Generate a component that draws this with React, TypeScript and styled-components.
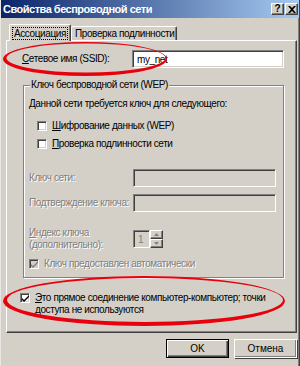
import React from 'react';
import styled, { createGlobalStyle } from 'styled-components';

const GlobalStyle = createGlobalStyle`
  html, body {
    margin: 0;
    padding: 0;
    background: #d4d0c8;
  }
  body {
    font-family: "Liberation Sans", Arial, sans-serif;
  }
`;

const Window = styled.div`
  position: relative;
  width: 300px;
  height: 366px;
  box-sizing: border-box;
  background: #d4d0c8;
  border-left: 1px solid #e8e6e2;
  border-right: 1px solid #404040;
  box-shadow: inset -1px 0 0 #808080;
  overflow: hidden;
  font-size: 10px;
  letter-spacing: -0.4px;
  color: #000;
`;

const TitleBar = styled.div`
  height: 18px;
  display: flex;
  align-items: center;
  padding: 0 1px 0 2px;
  background: linear-gradient(to right, #0a246a, #a6caf0);
`;

const TitleText = styled.div`
  flex: 1;
  color: #fff;
  font-weight: bold;
  font-size: 11px;
  letter-spacing: -0.5px;
`;

const CaptionButton = styled.div<{ $gap?: number }>`
  width: 13px;
  height: 12px;
  margin-left: ${({ $gap }) => $gap ?? 0}px;
  display: flex;
  align-items: center;
  justify-content: center;
  box-sizing: border-box;
  background: #d4d0c8;
  border: 1px solid;
  border-color: #fff #404040 #404040 #fff;
  box-shadow: inset -1px -1px 0 #808080;
  font-weight: bold;
  font-size: 10px;
  letter-spacing: 0;
  line-height: 1;
`;

const Body = styled.div`
  padding: 6px 0 0 5px;
`;

const TabStrip = styled.div`
  display: flex;
  align-items: flex-end;
  height: 16px;
  padding-left: 3px;
`;

const Tab = styled.div<{ $active?: boolean; $width: number }>`
  position: relative;
  z-index: ${({ $active }) => ($active ? 1 : 0)};
  width: ${({ $width }) => $width}px;
  height: ${({ $active }) => ($active ? 17 : 14)}px;
  margin-bottom: ${({ $active }) => ($active ? -1 : 0)}px;
  padding-left: ${({ $active }) => ($active ? 3 : 3)}px;
  display: flex;
  align-items: center;
  box-sizing: border-box;
  background: #d4d0c8;
  border-top: 1px solid #fff;
  border-left: 1px solid #fff;
  border-right: 1px solid #404040;
  box-shadow: inset -1px 0 0 #808080;
  border-radius: 2px 2px 0 0;
  white-space: nowrap;
`;

const FocusText = styled.span`
  outline: 1px dotted #000;
  padding: 0 1px;
`;

const Panel = styled.div`
  width: 291px;
  height: 293px;
  box-sizing: border-box;
  border: 1px solid;
  border-color: #fff #404040 #404040 #fff;
  box-shadow: inset -1px -1px 0 #808080;
  padding: 9px 0 0 15px;
  display: flex;
  flex-direction: column;
`;

const SsidRow = styled.div`
  display: flex;
  align-items: center;
`;

const Label = styled.span<{ $disabled?: boolean; $width?: number }>`
  width: ${({ $width }) => ($width ? `${$width}px` : 'auto')};
  flex-shrink: 0;
  color: ${({ $disabled }) => ($disabled ? '#808080' : '#000')};
  text-shadow: ${({ $disabled }) => ($disabled ? '1px 1px 0 #fff' : 'none')};
  line-height: 12px;
  white-space: nowrap;
`;

const TextBox = styled.div<{ $disabled?: boolean; $width: number }>`
  width: ${({ $width }) => $width}px;
  height: 18px;
  box-sizing: border-box;
  border: 1px solid;
  border-color: #808080 #fff #fff #808080;
  box-shadow: inset 1px 1px 0 #404040, inset -1px -1px 0 #d4d0c8;
  background: ${({ $disabled }) => ($disabled ? '#d4d0c8' : '#fff')};
  color: ${({ $disabled }) => ($disabled ? '#808080' : '#000')};
  padding: 0 4px;
  display: flex;
  align-items: center;
  font-size: 10px;
`;

const GroupBox = styled.fieldset`
  width: 261px;
  height: 199px;
  box-sizing: border-box;
  margin: 11px 0 0 1px;
  padding: 0 0 0 5px;
  border: 1px solid #808080;
  box-shadow: 1px 1px 0 #fff, inset 1px 1px 0 #fff;
  display: flex;
  flex-direction: column;
`;

const Legend = styled.legend`
  padding: 0 1px;
  margin-left: 1px;
  background: #d4d0c8;
  line-height: 12px;
`;

const Hint = styled.div`
  margin-top: 7px;
  line-height: 12px;
`;

const CheckRow = styled.div<{ $indent?: number; $top: number }>`
  display: flex;
  align-items: flex-start;
  margin: ${({ $top }) => $top}px 0 0 ${({ $indent }) => $indent ?? 0}px;
`;

const Box = styled.div<{ $disabled?: boolean }>`
  width: 10px;
  height: 10px;
  flex-shrink: 0;
  box-sizing: border-box;
  border: 1px solid;
  border-color: #808080 #fff #fff #808080;
  box-shadow: inset 1px 1px 0 #404040, inset -1px -1px 0 #d4d0c8;
  background: ${({ $disabled }) => ($disabled ? '#d4d0c8' : '#fff')};
  display: flex;
  align-items: center;
  justify-content: center;
  margin-right: 5px;
  margin-top: 1px;
`;

const CheckText = styled.span<{ $disabled?: boolean }>`
  color: ${({ $disabled }) => ($disabled ? '#808080' : '#000')};
  text-shadow: ${({ $disabled }) => ($disabled ? '1px 1px 0 #fff' : 'none')};
  line-height: 12px;
`;

const FieldRow = styled.div<{ $top: number }>`
  display: flex;
  align-items: center;
  margin-top: ${({ $top }) => $top}px;
`;

const Spinner = styled.div`
  display: flex;
  width: 30px;
  height: 18px;
`;

const SpinButtons = styled.div`
  display: flex;
  flex-direction: column;
  width: 13px;
`;

const SpinButton = styled.div`
  flex: 1;
  box-sizing: border-box;
  border: 1px solid;
  border-color: #fff #404040 #404040 #fff;
  box-shadow: inset -1px -1px 0 #808080;
  background: #d4d0c8;
  display: flex;
  align-items: center;
  justify-content: center;
`;

const ButtonRow = styled.div`
  display: flex;
  justify-content: flex-end;
  gap: 5px;
  margin-top: 6px;
  padding-right: 2px;
`;

const Button = styled.div<{ $default?: boolean }>`
  width: 63px;
  height: 19px;
  box-sizing: border-box;
  display: flex;
  align-items: center;
  justify-content: center;
  background: #d4d0c8;
  border: 1px solid ${({ $default }) => ($default ? '#000' : '#fff')};
  box-shadow: ${({ $default }) =>
    $default
      ? 'inset 1px 1px 0 #fff, inset -1px -1px 0 #404040, inset -2px -2px 0 #808080'
      : '1px 1px 0 #404040, inset -1px -1px 0 #808080'};
  font-size: 10px;
  letter-spacing: 0;
`;

const Overlay = styled.svg`
  position: absolute;
  left: 0;
  top: 0;
  pointer-events: none;
`;

const Mn = styled.span`
  text-decoration: underline;
`;

const Check: React.FC<{ color?: string }> = ({ color = '#000' }) => (
  <svg width="7" height="7" viewBox="0 0 7 7">
    <path d="M0 3 L2 5 L7 0 L7 2 L2 7 L0 5 Z" fill={color} />
  </svg>
);

const Arrow: React.FC<{ up?: boolean }> = ({ up }) => (
  <svg width="5" height="3" viewBox="0 0 5 3">
    <path d={up ? 'M2.5 0 L5 3 L0 3 Z' : 'M0 0 L5 0 L2.5 3 Z'} fill="#808080" />
  </svg>
);

const ring = (cx: number, cy: number, rx: number, ry: number, dx: number, dy: number, t: number) => {
  const e = (x: number, y: number, a: number, b: number) =>
    `M${x - a} ${y} A${a} ${b} 0 1 0 ${x + a} ${y} A${a} ${b} 0 1 0 ${x - a} ${y} Z`;
  return `${e(cx, cy, rx, ry)} ${e(cx + dx, cy + dy, rx - t, ry - t)}`;
};

const App: React.FC = () => (
  <>
    <GlobalStyle />
    <Window>
      <TitleBar>
        <TitleText>Свойства беспроводной сети</TitleText>
        <CaptionButton>?</CaptionButton>
        <CaptionButton $gap={1}>
          <svg width="8" height="7" viewBox="0 0 8 7">
            <path d="M0 0 L2 0 L4 2 L6 0 L8 0 L5 3.5 L8 7 L6 7 L4 5 L2 7 L0 7 L3 3.5 Z" fill="#000" />
          </svg>
        </CaptionButton>
      </TitleBar>
      <Body>
        <TabStrip>
          <Tab $active $width={62}>
            <FocusText>Ассоциация</FocusText>
          </Tab>
          <Tab $width={106}>Проверка подлинности</Tab>
        </TabStrip>
        <Panel>
          <SsidRow>
            <Label $width={110}>
              <Mn>С</Mn>етевое имя (SSID):
            </Label>
            <TextBox $width={152}>my_net</TextBox>
          </SsidRow>
          <GroupBox>
            <Legend>Ключ беспроводной сети (WEP)</Legend>
            <Hint>Данной сети требуется ключ для следующего:</Hint>
            <CheckRow $indent={8} $top={10}>
              <Box />
              <CheckText>
                <Mn>Ш</Mn>ифрование данных (WEP)
              </CheckText>
            </CheckRow>
            <CheckRow $indent={8} $top={6}>
              <Box />
              <CheckText>
                <Mn>П</Mn>роверка подлинности сети
              </CheckText>
            </CheckRow>
            <FieldRow $top={19}>
              <Label $disabled $width={104}>
                Ключ сети:
              </Label>
              <TextBox $disabled $width={143} />
            </FieldRow>
            <FieldRow $top={7}>
              <Label $disabled $width={104}>
                Подтверждение ключа:
              </Label>
              <TextBox $disabled $width={143} />
            </FieldRow>
            <FieldRow $top={15}>
              <Label $disabled $width={104}>
                <Mn>И</Mn>ндекс ключа
                <br />
                (дополнительно):
              </Label>
              <Spinner>
                <TextBox $disabled $width={17}>
                  1
                </TextBox>
                <SpinButtons>
                  <SpinButton>
                    <Arrow up />
                  </SpinButton>
                  <SpinButton>
                    <Arrow />
                  </SpinButton>
                </SpinButtons>
              </Spinner>
            </FieldRow>
            <CheckRow $top={7}>
              <Box $disabled>
                <Check color="#808080" />
              </Box>
              <CheckText $disabled>Ключ предоставлен автоматически</CheckText>
            </CheckRow>
          </GroupBox>
          <CheckRow $indent={-2} $top={14}>
            <Box>
              <Check />
            </Box>
            <CheckText>
              <Mn>Э</Mn>то прямое соединение компьютер-компьютер; точки
              <br />
              доступа не используются
            </CheckText>
          </CheckRow>
        </Panel>
        <ButtonRow>
          <Button $default>OK</Button>
          <Button>Отмена</Button>
        </ButtonRow>
      </Body>
      <Overlay width="300" height="366">
        <path d={ring(84, 59, 82, 17, 1, -1, 2.5)} fill="#e8000c" fillRule="evenodd" />
        <path d={ring(143, 301, 141, 25, 1, -1, 3)} fill="#e8000c" fillRule="evenodd" />
      </Overlay>
    </Window>
  </>
);

export default App;
